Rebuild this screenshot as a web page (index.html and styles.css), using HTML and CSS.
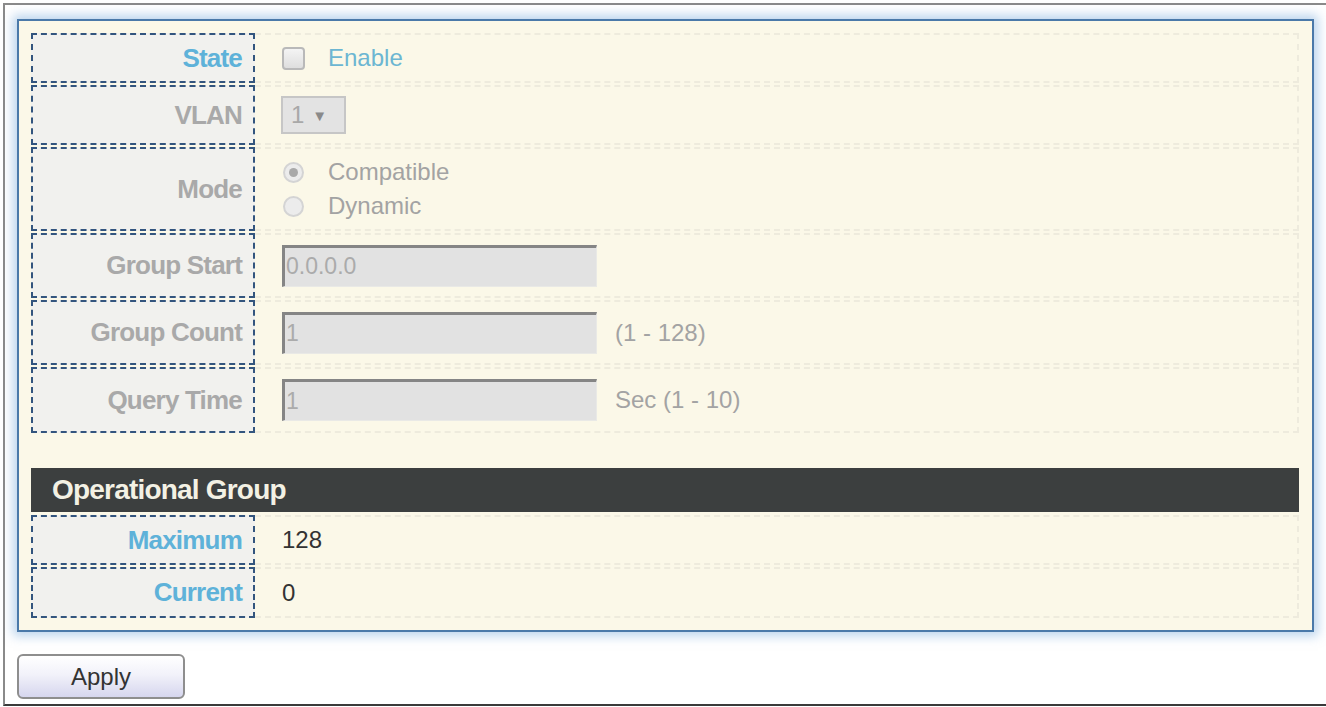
FILE: index.html
```html
<!DOCTYPE html>
<html lang="en">
<head>
    <meta charset="UTF-8">
    <meta name="viewport" content="width=device-width, initial-scale=1.0">
    <title>IGMP Snooping Querier</title>
    <link rel="stylesheet" href="styles.css">
</head>
<body>
    <div class="frame">
        <div class="panel">
            <div class="rows">
                <div class="row h50">
                    <div class="label active">State</div>
                    <div class="value">
                        <span class="checkbox"></span>
                        <span class="enable">Enable</span>
                    </div>
                </div>
                <div class="row h60">
                    <div class="label">VLAN</div>
                    <div class="value">
                        <span class="select">1 <span class="arrow">&#9660;</span></span>
                    </div>
                </div>
                <div class="row h84">
                    <div class="label">Mode</div>
                    <div class="value">
                        <div class="radios">
                            <div class="radio-line"><span class="radio checked"></span>Compatible</div>
                            <div class="radio-line"><span class="radio"></span>Dynamic</div>
                        </div>
                    </div>
                </div>
                <div class="row h65">
                    <div class="label">Group Start</div>
                    <div class="value">
                        <span class="input">0.0.0.0</span>
                    </div>
                </div>
                <div class="row h65">
                    <div class="label">Group Count</div>
                    <div class="value">
                        <span class="input">1</span>
                        <span class="hint">(1 - 128)</span>
                    </div>
                </div>
                <div class="row h66">
                    <div class="label">Query Time</div>
                    <div class="value">
                        <span class="input">1</span>
                        <span class="hint">Sec (1 - 10)</span>
                    </div>
                </div>
            </div>

            <div class="section-title">Operational Group</div>

            <div class="rows">
                <div class="row h50">
                    <div class="label active">Maximum</div>
                    <div class="value dark">128</div>
                </div>
                <div class="row h51">
                    <div class="label active">Current</div>
                    <div class="value dark">0</div>
                </div>
            </div>
        </div>

        <button type="button" class="apply-btn">Apply</button>
    </div>
</body>
</html>
```

FILE: styles.css
```css
body {
    margin: 0;
    padding: 0;
    font-family: "Liberation Sans", Arial, sans-serif;
    background-color: #fff;
    overflow: hidden;
}
.frame {
    margin: 3px 0 0 3px;
    height: 699px;
    border-top: 2px solid #8a8a8a;
    border-left: 2px solid #8a8a8a;
    border-bottom: 2px solid #3a3a3a;
    background-color: #fff;
}
.panel {
    margin: 14px 12px 0 12px;
    padding: 12px 13px 12px 12px;
    background-color: #fbf8e8;
    border: 2px solid #4a79a9;
    box-shadow: 0 0 10px 4px rgba(120, 170, 220, 0.5);
}
.rows {
    display: flex;
    flex-direction: column;
    gap: 2px;
}
.row {
    display: flex;
}
.h50 { height: 50px; }
.h51 { height: 51px; }
.h60 { height: 60px; }
.h65 { height: 65px; }
.h66 { height: 66px; }
.h84 { height: 84px; }
.label {
    width: 224px;
    box-sizing: border-box;
    border: 2px dashed #33557e;
    background-color: #f1f1ee;
    display: flex;
    align-items: center;
    justify-content: flex-end;
    padding-right: 11px;
    font-size: 26px;
    font-weight: bold;
    letter-spacing: -0.8px;
    color: #a9a9a9;
}
.label.active {
    color: #5eb2d9;
}
.value {
    flex: 1;
    display: flex;
    align-items: center;
    padding-left: 27px;
    border: 2px dashed #eeebdd;
    border-left: none;
    font-size: 24px;
    color: #a3a3a3;
}
.value.dark {
    color: #333;
}
.checkbox {
    width: 19px;
    height: 19px;
    border: 2px solid #b9b9b9;
    border-radius: 4px;
    background: linear-gradient(#f4f4f4, #dedede);
    margin-right: 23px;
}
.enable {
    color: #6cb6d2;
}
.select {
    width: 61px;
    height: 34px;
    box-sizing: content-box;
    border: 2px solid #c6c6c6;
    background-color: #e3e3e3;
    display: flex;
    align-items: center;
    margin-left: -1px;
    color: #a8a8a8;
    font-size: 24px;
    text-indent: 8px;
}
.arrow {
    font-size: 15px;
    color: #8a8a8a;
    text-indent: 0;
    margin-left: 8px;
}
.radios {
    display: flex;
    flex-direction: column;
}
.radio-line {
    display: flex;
    align-items: center;
    height: 34px;
}
.radio {
    width: 17px;
    height: 17px;
    border: 2px solid #d4d4d4;
    border-radius: 50%;
    background-color: #ececec;
    margin: 0 24px 0 1px;
    display: flex;
    align-items: center;
    justify-content: center;
}
.radio.checked::after {
    content: "";
    width: 9px;
    height: 9px;
    border-radius: 50%;
    background-color: #a9a9a9;
}
.input {
    width: 310px;
    height: 38px;
    box-sizing: content-box;
    border-top: 3px solid #858585;
    border-left: 3px solid #858585;
    border-right: 1px solid #e9e9e6;
    border-bottom: 1px solid #e9e9e6;
    background-color: #e2e2e2;
    display: flex;
    align-items: center;
    padding-left: 1px;
    color: #ababab;
    font-size: 23px;
}
.hint {
    margin-left: 18px;
}
.section-title {
    margin: 35px 0 3px 0;
    height: 44px;
    background-color: #3c3f3f;
    color: #f3f1e4;
    font-size: 28px;
    font-weight: bold;
    display: flex;
    align-items: center;
    padding-left: 21px;
    letter-spacing: -0.8px;
}
.apply-btn {
    margin: 22px 0 0 12px;
    width: 168px;
    height: 45px;
    border: 2px solid #8e8e8e;
    border-radius: 6px;
    background: linear-gradient(#ffffff, #f2f2fa 45%, #d6d6ee);
    font-family: "Liberation Sans", Arial, sans-serif;
    font-size: 24px;
    color: #333;
    cursor: pointer;
    display: block;
}
```
